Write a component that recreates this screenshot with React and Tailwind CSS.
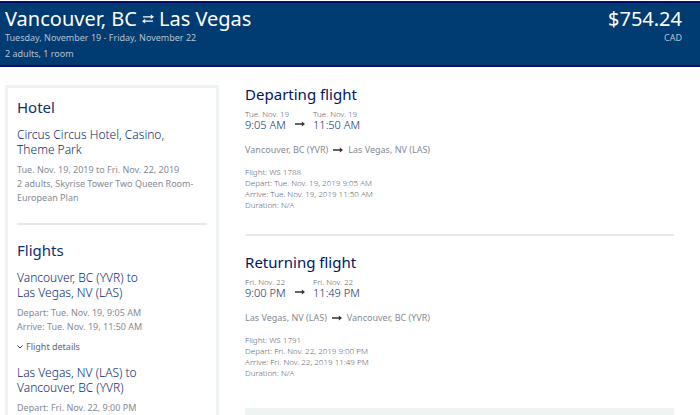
import React, { useState } from 'react';

const flights = [
  {
    title: 'Departing flight',
    from: 'Vancouver, BC (YVR)',
    to: 'Las Vegas, NV (LAS)',
    day: 'Tue. Nov. 19',
    departTime: '9:05 AM',
    arriveTime: '11:50 AM',
    details: [
      'Flight: WS 1788',
      'Depart: Tue. Nov. 19, 2019 9:05 AM',
      'Arrive: Tue. Nov. 19, 2019 11:50 AM',
      'Duration: N/A',
    ],
  },
  {
    title: 'Returning flight',
    from: 'Las Vegas, NV (LAS)',
    to: 'Vancouver, BC (YVR)',
    day: 'Fri. Nov. 22',
    departTime: '9:00 PM',
    arriveTime: '11:49 PM',
    details: [
      'Flight: WS 1791',
      'Depart: Fri. Nov. 22, 2019 9:00 PM',
      'Arrive: Fri. Nov. 22, 2019 11:49 PM',
      'Duration: N/A',
    ],
  },
];

const Arrow = () => (
  <svg className="w-[10px] h-[6px] shrink-0 text-[#333]" viewBox="0 0 10 6" fill="currentColor" aria-hidden="true">
    <path d="M0 2.3h6.8V.5L10 3 6.8 5.5V3.7H0z" />
  </svg>
);

const SwapIcon = () => (
  <svg className="w-3 h-[10px] shrink-0" viewBox="0 0 12 10" fill="currentColor" aria-hidden="true">
    <path d="M1 2.2h7.8V.4L12 2.8 8.8 5.2V3.4H1zM11 6.6H3.2V4.8L0 7.2l3.2 2.4V7.8H11z" />
  </svg>
);

const Header = () => (
  <header className="mt-px flex justify-between bg-[#003b71] border-y-2 border-[#040d66] pl-[5px] pr-[18px] pt-1 pb-[3px] text-[9px] leading-4 text-[#b5c2d2]">
    <div>
      <h1 className="flex items-center gap-[5px] text-[20px] leading-[23px] text-white">
        Vancouver, BC <SwapIcon /> Las Vegas
      </h1>
      <p>Tuesday, November 19 - Friday, November 22</p>
      <p>2 adults, 1 room</p>
    </div>
    <div className="text-right">
      <p className="text-[20px] leading-[23px] text-white">$754.24</p>
      <p>CAD</p>
    </div>
  </header>
);

const Leg = ({ flight }) => {
  const [open, setOpen] = useState(false);

  return (
    <div className="mb-[11px]">
      <h3 className="text-[12px] leading-[15px] font-light text-[#0a2c68]">
        {flight.from} to
        <br />
        {flight.to}
      </h3>
      <p className="mt-[6px]">Depart: {flight.day}, {flight.departTime}</p>
      <p>Arrive: {flight.day}, {flight.arriveTime}</p>
      <button
        type="button"
        aria-expanded={open}
        onClick={() => setOpen(!open)}
        className="mt-[6px] flex items-center gap-[3px] text-[#5f6672] cursor-pointer"
      >
        <svg className="w-[6px] h-[4px]" viewBox="0 0 6 4" fill="none" stroke="#1b3c74" aria-hidden="true">
          <path d="M.5.5 3 3 5.500.5" />
        </svg>
        Flight details
      </button>
      {open && flight.details.map((line) => <p key={line}>{line}</p>)}
    </div>
  );
};

const Sidebar = () => (
  <aside className="w-[32%] shrink-0 border-3 border-[#edf3f3] px-[9px] pt-[7px] text-[9px] leading-[14px] text-[#858a93]">
    <h2 className="text-[15px] leading-6 text-[#0f2f6b]">Hotel</h2>
    <h3 className="mt-2 pr-5 text-[12px] leading-[15px] font-light text-[#0a2c68]">Circus Circus Hotel, Casino, Theme Park</h3>
    <p className="mt-[6px]">Tue. Nov. 19, 2019 to Fri. Nov. 22, 2019</p>
    <p>2 adults, Skyrise Tower Two Queen Room-European Plan</p>
    <hr className="mt-[18px] border-t-2 border-[#e6e8ea]" />
    <h2 className="mt-[13px] mb-2 text-[15px] leading-6 text-[#0f2f6b]">Flights</h2>
    {flights.map((flight) => <Leg key={flight.title} flight={flight} />)}
  </aside>
);

const FlightTime = ({ day, time }) => (
  <div className="w-[42px] whitespace-nowrap text-[8px] leading-[10px] font-light text-[#5f656f]">
    <p>{day}</p>
    <p className="text-[11px] leading-3 text-[#0a2c68]">{time}</p>
  </div>
);

const FlightSection = ({ flight }) => (
  <section className="text-[9px] text-[#858a93]">
    <h2 className="text-[15px] leading-[18px] text-[#00165f]">{flight.title}</h2>
    <div className="mt-[6px] flex items-end gap-2">
      <FlightTime day={flight.day} time={flight.departTime} />
      <div className="mb-1"><Arrow /></div>
      <FlightTime day={flight.day} time={flight.arriveTime} />
    </div>
    <p className="mt-3 flex items-center gap-[5px] leading-[14px]">
      {flight.from} <Arrow /> {flight.to}
    </p>
    <div className="mt-[9px] text-[8px] leading-[11px] font-light text-[#5f656f]">
      {flight.details.map((line) => <p key={line}>{line}</p>)}
    </div>
  </section>
);

export default function App() {
  return (
    <div className="h-screen overflow-hidden flex flex-col bg-white font-['Noto_Sans','Open_Sans',sans-serif]">
      <Header />
      <div className="mt-[18px] pl-[5px] pr-[26px] flex gap-[26px]">
        <Sidebar />
        <main className="flex-1 min-w-0">
          <FlightSection flight={flights[0]} />
          <hr className="mt-6 mb-[17px] border-t-2 border-[#e9eaeb]" />
          <FlightSection flight={flights[1]} />
          <div className="mt-[30px] h-12 bg-[#edf4f3]" />
        </main>
      </div>
    </div>
  );
}
